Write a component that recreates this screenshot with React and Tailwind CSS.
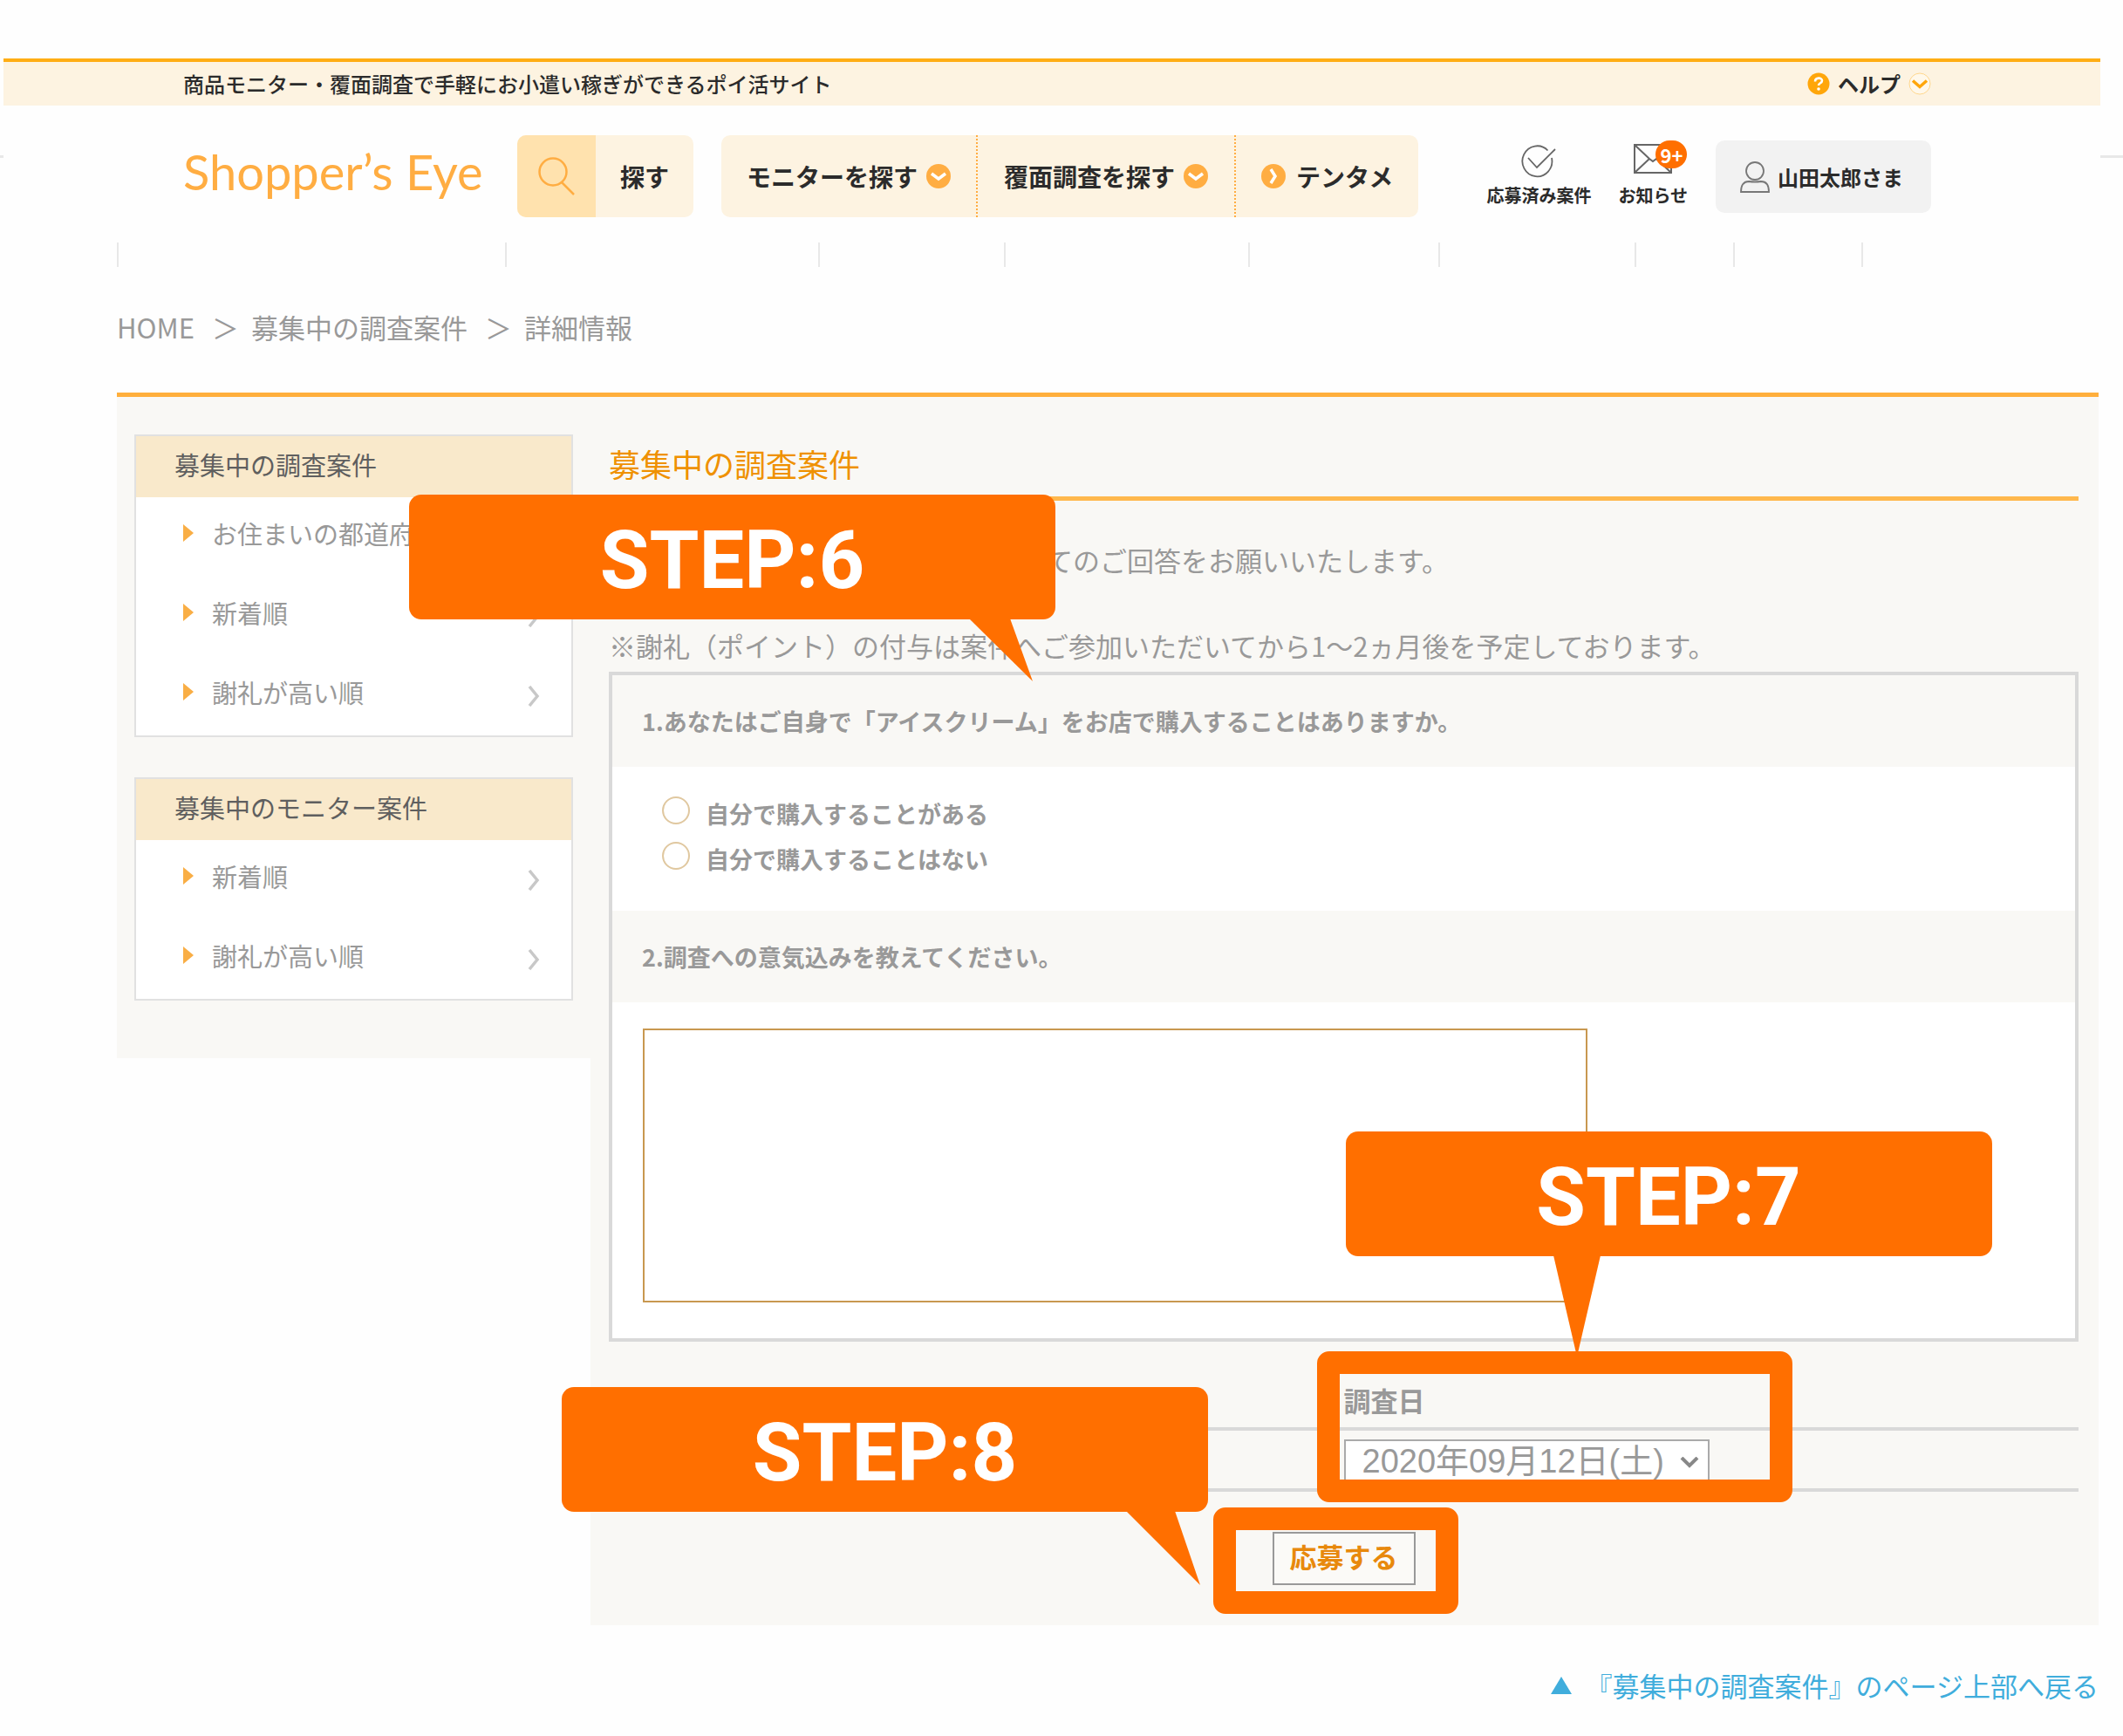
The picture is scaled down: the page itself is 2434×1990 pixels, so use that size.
import React, { useState } from 'react';

const sideMenus = [
  {
    title: '募集中の調査案件',
    items: ['お住まいの都道府', '新着順', '謝礼が高い順'],
  },
  {
    title: '募集中のモニター案件',
    items: ['新着順', '謝礼が高い順'],
  },
];

const answers = ['自分で購入することがある', '自分で購入することはない'];

function CircleArrow({ right }) {
  return (
    <svg viewBox="0 0 28 28" className="w-7 h-7 shrink-0" fill="none">
      <circle cx="14" cy="14" r="14" fill="#ffad42" />
      <path
        d={right ? 'M11 6l5 8-5 8' : 'M6 11l8 6 8-6'}
        stroke="#fff"
        strokeWidth="3.500"
      />
    </svg>
  );
}

function SideMenu({ title, items }) {
  return (
    <section className="bg-white border-2 border-[#e1e1e1]">
      <h2 className="h-[70px] pl-11 bg-[#f9e9cb] text-[#5f5f5f] text-[29px] leading-[64px]">{title}</h2>
      <ul>
        {items.map((item) => (
          <li key={item}>
            <a href="#" className="h-[91px] pl-[54px] pr-9 pb-2.5 flex items-center text-[29px] leading-10">
              <svg viewBox="0 0 12 20" className="w-3 h-5 mr-[21px]">
                <path d="M0 0l12 10L0 20z" fill="#f9ae45" />
              </svg>
              {item}
              <svg viewBox="0 0 14 24" className="w-3.5 h-6 ml-auto mt-2.5" fill="none">
                <path d="M2 1l9 11-9 11" stroke="#c8c8c8" strokeWidth="3.500" />
              </svg>
            </a>
          </li>
        ))}
      </ul>
    </section>
  );
}

// Speech bubble; the tail is drawn under the box from its own svg
function Callout({ label, className, children }) {
  return (
    <div className={`absolute z-20 w-[741px] h-[143px] rounded-[14px] bg-[#ff6f00] text-white text-center font-[Roboto,sans-serif] font-bold text-[92px] leading-[151px] ${className}`}>
      {label}
      {children}
    </div>
  );
}

export default function App() {
  const [answer, setAnswer] = useState('');
  const [reason, setReason] = useState('');

  return (
    <div className="relative min-h-screen bg-[#fefefe] pt-[67px] pb-8 text-[#999] font-['Noto_Sans_CJK_JP',sans-serif]">
      <div className="absolute inset-x-0 top-[178px] h-[3px] bg-[#e8e8e8]" />

      <header className="relative ml-1 mr-[26px] bg-[#fefefe] text-[#2b2b2b]">
        <div className="h-[54px] pl-[206px] pr-[194px] border-t-4 border-[#ffad14] bg-[#fdf3e1] flex items-center justify-between">
          <p className="text-2xl font-medium">商品モニター・覆面調査で手軽にお小遣い稼ぎができるポイ活サイト</p>
          <a href="#" className="flex items-center gap-[9px] text-2xl font-bold">
            <svg viewBox="0 0 26 26" className="w-[26px] h-[26px]" fill="none">
              <circle cx="13" cy="13" r="12.500" fill="#ffa60a" />
              <path d="M9 10.500c0-5 8-5 8-1 0 3-4 2.500-4 5.500" stroke="#fff" strokeWidth="2.600" />
              <circle cx="13" cy="19" r="1.800" fill="#fff" />
            </svg>
            ヘルプ
            <svg viewBox="0 0 26 26" className="w-[26px] h-[26px]" fill="none">
              <circle cx="13" cy="13" r="12" fill="#fff8ea" stroke="#ffd78c" />
              <path d="M5 9.500l8 7 8-7" stroke="#ffa60a" strokeWidth="3.500" />
            </svg>
          </a>
        </div>

        <div className="h-[157px] pt-[34px] pl-[206px] pr-[194px] flex items-start">
          <a href="#" className="w-[383px] h-[94px] font-[Lato,sans-serif] text-[56px] leading-[84px] text-[#ffad42] whitespace-nowrap">
            Shopper’s Eye
          </a>
          <button type="button" className="w-[202px] h-[94px] rounded-[10px] overflow-hidden bg-[#fdf3e1] flex items-center text-[28px] font-bold">
            <span className="w-[90px] h-full bg-[#ffe2ae] flex items-center justify-center">
              <svg viewBox="0 0 42 44" className="w-[42px] h-11" fill="none" stroke="#ffad42" strokeWidth="2.500">
                <circle cx="17" cy="17" r="15.500" />
                <path d="M27 29l14 14" />
              </svg>
            </span>
            <span className="grow">探す</span>
          </button>
          <nav className="ml-8 h-[94px] rounded-[10px] bg-[#fdf3e1] flex text-[28px] font-bold">
            <a href="#" className="px-[29px] flex items-center gap-2.5">
              モニターを探す
              <CircleArrow />
            </a>
            <a href="#" className="px-[30px] flex items-center gap-2.5 border-l-2 border-dotted border-[#ffad42]">
              覆面調査を探す
              <CircleArrow />
            </a>
            <a href="#" className="px-[29px] flex items-center gap-3 border-l-2 border-dotted border-[#ffad42]">
              <CircleArrow right />
              テンタメ
            </a>
          </nav>

          <div className="ml-auto pt-1.5 flex items-start">
            <a href="#" className="mr-[31px] flex flex-col items-center text-xl leading-7 font-bold">
              <svg viewBox="0 0 40 40" className="w-10 h-10 mt-1 mb-[5px]" fill="none" stroke="#666" strokeWidth="1.800">
                <path d="M30.500 7.500A17 17.500 0 1 0 35 16" />
                <path d="M8 16l10 11L39 6" />
              </svg>
              応募済み案件
            </a>
            <a href="#" className="relative mr-8 flex flex-col items-center text-xl leading-7 font-bold">
              <svg viewBox="0 0 44 40" className="w-11 h-10 mt-1 mb-[5px]" fill="none" stroke="#666" strokeWidth="2">
                <path d="M1 1h42v32H1z" />
                <path d="M1 1l17 16 4 3 4-3L43 1M1 33l17-16M43 33L26 17" />
              </svg>
              <span className="absolute left-[43px] top-0 w-9 h-8 rounded-full bg-[#ff6f00] text-white text-center text-[22px] leading-8">9+</span>
              お知らせ
            </a>
            <a href="#" className="h-[83px] pl-7 pr-8 rounded-[10px] bg-[#f2f2f2] flex items-center gap-[9px] text-2xl font-bold">
              <svg viewBox="0 0 34 36" className="w-[34px] h-9" fill="none" stroke="#777" strokeWidth="1.800">
                <circle cx="17" cy="11" r="10" />
                <path d="M1 35c0-8 3-12 9-12q7 1 14 0c6 0 9 4 9 12z" />
              </svg>
              山田太郎さま
            </a>
          </div>
        </div>
      </header>

      <div className="relative ml-[134px] mr-7">
        <ul className="h-7 grid grid-cols-[445fr_358fr_213fr_280fr_218fr_224fr_113fr_147fr_272fr]">
          {Array.from({ length: 9 }, (_, i) => (
            <li key={i} className="border-l-2 border-[#e8e8e8]" />
          ))}
        </ul>

        <nav className="mt-[49px] mb-[55px] flex gap-3.5 text-[31px] leading-10">
          <a href="#">HOME</a>
          <span className="pl-1.5">＞</span>
          <a href="#">募集中の調査案件</a>
          <span className="pl-1.5">＞</span>
          <span>詳細情報</span>
        </nav>

        <div className="border-t-[5px] border-[#ffaf3c] flex items-start">
          <aside className="w-[543px] shrink-0 bg-[#f9f8f5] pt-[43px] px-5 pb-[66px] flex flex-col gap-[46px]">
            {sideMenus.map((menu) => (
              <SideMenu key={menu.title} {...menu} />
            ))}
          </aside>

          <main className="grow bg-[#f9f8f5] pl-[21px] pr-[23px] pt-[51px] pb-[46px]">
            <h1 className="h-[68px] border-b-[5px] border-[#ffb84d] text-[#ef9100] text-4xl leading-[50px]">募集中の調査案件</h1>

            <div className="relative pt-12 text-[31px] leading-10">
              <p className="mb-[58px] pl-[501px]">てのご回答をお願いいたします。</p>
              <p>※謝礼（ポイント）の付与は案件へご参加いただいてから1～2ヵ月後を予定しております。</p>
              <Callout label="STEP:6" className="-top-[7px] -left-[229px]">
                <svg viewBox="0 0 74 73" className="absolute left-[642px] top-[142px] w-[74px] h-[73px]" fill="#ff6f00">
                  <path d="M0 0h47l26 72z" />
                </svg>
              </Callout>
            </div>

            <form onSubmit={(e) => e.preventDefault()}>
              <div className="mt-2.5 border-4 border-[#d9d9d9] bg-white text-[27px] leading-9 font-bold">
                <fieldset>
                  <legend className="w-full h-[105px] pl-[34px] pt-[35px] bg-[#f9f8f5]">
                    1.あなたはご自身で「アイスクリーム」をお店で購入することはありますか。
                  </legend>
                  <div className="h-[165px] pl-[57px] pt-7">
                    {answers.map((text) => (
                      <label key={text} className="h-[52px] flex items-center gap-[18px]">
                        <input
                          type="radio"
                          name="answer"
                          checked={answer === text}
                          onChange={() => setAnswer(text)}
                          className="appearance-none w-8 h-8 mb-2 rounded-full border-2 border-[#e0c8a0] bg-white checked:bg-[#ffad42]"
                        />
                        {text}
                      </label>
                    ))}
                  </div>
                </fieldset>
                <label htmlFor="reason" className="block h-[105px] pl-[34px] pt-[35px] bg-[#f9f8f5]">
                  2.調査への意気込みを教えてください。
                </label>
                <div className="pl-[35px] pt-[30px] pb-[41px]">
                  <textarea
                    id="reason"
                    value={reason}
                    onChange={(e) => setReason(e.target.value)}
                    className="block w-[1083px] h-[314px] p-3 resize-none border-2 border-[#c89850] bg-white font-normal"
                  />
                </div>
              </div>

              <div className="relative">
                <table className="w-full table-fixed border-collapse">
                  <thead>
                    <tr className="h-[100px] border-b-4 border-[#d9d9d9]">
                      <th />
                      <th className="pt-9 text-left text-[31px] leading-10 font-bold">
                        <label htmlFor="date">調査日</label>
                      </th>
                    </tr>
                  </thead>
                  <tbody>
                    <tr className="h-[70px] border-b-4 border-[#d9d9d9]">
                      <td />
                      <td className="pt-1">
                        <div className="relative w-[419px]">
                          <select id="date" className="block appearance-none w-full h-[50px] pl-[19px] border-2 border-[#aaa] bg-white font-['Liberation_Sans','Noto_Sans_CJK_JP',sans-serif] text-[38px] leading-[46px]">
                            <option>2020年09月12日(土)</option>
                          </select>
                          <svg viewBox="0 0 22 14" className="absolute right-3 top-5 w-[22px] h-3.5 pointer-events-none" fill="none">
                            <path d="M2 1l9 9 9-9" stroke="#888" strokeWidth="4" />
                          </svg>
                        </div>
                      </td>
                    </tr>
                  </tbody>
                </table>
                <div className="absolute z-10 left-1/2 top-[11px] -ml-[31px] w-[545px] h-[173px] rounded-[14px] border-[26px] border-[#ff6f00] pointer-events-none" />
                <Callout label="STEP:7" className="left-1/2 -top-[241px] ml-[2px]">
                  <svg viewBox="0 0 54 112" className="absolute left-[238px] top-[142px] w-[54px] h-28" fill="#ff6f00">
                    <path d="M0 0h54L28 112h-2z" />
                  </svg>
                </Callout>
                <Callout label="STEP:8" className="-left-[54px] top-[52px]">
                  <svg viewBox="0 0 86 86" className="absolute left-[647px] top-[142px] w-[86px] h-[86px]" fill="#ff6f00">
                    <path d="M0 0h56l29 85z" />
                  </svg>
                </Callout>
              </div>

              <div className="relative mt-[46px] flex justify-center">
                <button type="submit" className="w-[164px] h-[61px] pb-1.5 border-2 border-[#999] bg-[#fbfaf7] text-[#e8890c] text-[31px] leading-[50px] font-bold">
                  応募する
                </button>
                <div className="absolute left-1/2 -top-7 -ml-[150px] w-[281px] h-[122px] rounded-[14px] border-[26px] border-[#ff6f00] pointer-events-none" />
              </div>
            </form>
          </main>
        </div>

        <a href="#" className="mt-[49px] flex items-center justify-end text-[31px] leading-10 text-[#40addc]">
          <svg viewBox="0 0 24 20" className="w-6 h-5 mr-4">
            <path d="M12 0l12 20H0z" fill="#40addc" />
          </svg>
          『募集中の調査案件』のページ上部へ戻る
        </a>
      </div>
    </div>
  );
}
